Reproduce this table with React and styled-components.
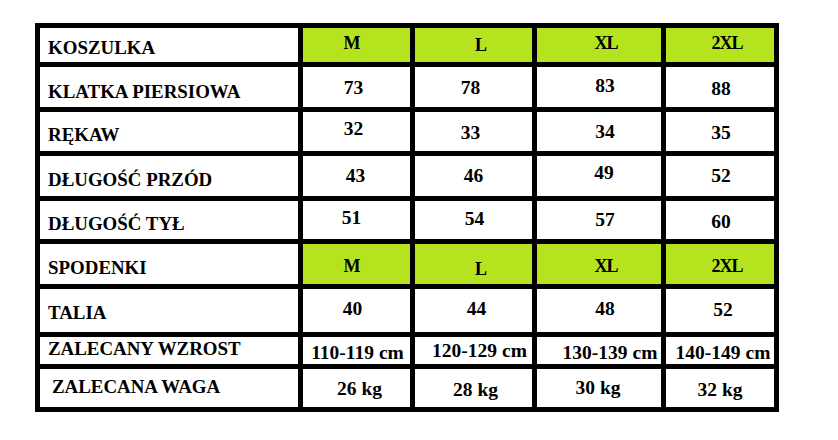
import styled, { createGlobalStyle } from 'styled-components';

const GlobalStyle = createGlobalStyle`
  html, body {
    margin: 0;
    padding: 0;
    background: #fff;
  }
`;

const Page = styled.div`
  width: 838px;
  height: 440px;
  padding: 23px 0 0 35px;
  box-sizing: border-box;
  background: #fff;
`;

const Table = styled.div`
  display: grid;
  grid-template-columns: 258px 107px 117px 124px 108px;
  grid-template-rows: 34px 40px 39px 40px 38px 40px 43px 27px 38px;
  gap: 5px;
  padding: 5px;
  width: max-content;
  background: #000;
  font-family: 'Liberation Serif', 'Times New Roman', serif;
  font-weight: bold;
  color: #000;
`;

const Cell = styled.div`
  box-sizing: border-box;
  background: ${({ $green }) => ($green ? '#b5e41f' : '#fff')};
  padding-top: ${({ $top }) => $top}px;
  line-height: 18px;
  white-space: nowrap;
  overflow: hidden;
`;

const Label = styled(Cell)`
  padding-left: ${({ $left }) => $left || 8}px;
  font-size: 18.9px;
`;

const Value = styled(Cell)`
  text-align: center;
  font-size: ${({ $size }) => $size}px;
  letter-spacing: ${({ $tight }) => ($tight ? '-1px' : '0')};
  padding-left: ${({ $dx }) => ($dx > 0 ? $dx * 2 : 0)}px;
  padding-right: ${({ $dx }) => ($dx < 0 ? -$dx * 2 : 0)}px;
`;

// [label, labelTop, labelLeft, green?, cells: [text, top, dx]]
const rows = [
  ['KOSZULKA', 11, 8, true, [['M', 6, -5], ['L', 8, 7], ['XL', 6, 7], ['2XL', 6, 7]]],
  ['KLATKA PIERSIOWA', 16, 8, false, [['73', 12, -3], ['78', 12, -3], ['83', 10, 6], ['88', 13, 1]]],
  ['RĘKAW', 14, 8, false, [['32', 8, -3], ['33', 12, -3], ['34', 11, 6], ['35', 12, 1]]],
  ['DŁUGOŚĆ PRZÓD', 15, 8, false, [['43', 11, -1], ['46', 11, 0], ['49', 8, 5], ['52', 11, 1]]],
  ['DŁUGOŚĆ TYŁ', 14, 8, false, [['51', 8, -5], ['54', 9, 1], ['57', 10, 6], ['60', 12, 1]]],
  ['SPODENKI', 15, 8, true, [['M', 13, -5], ['L', 16, 7], ['XL', 13, 7], ['2XL', 13, 7]]],
  ['TALIA', 15, 8, false, [['40', 11, -4], ['44', 11, 3], ['48', 11, 6], ['52', 12, 3]]],
  ['ZALECANY WZROST', 3, 8, false, [['110-119 cm', 7, 1], ['120-129 cm', 5, 6], ['130-139 cm', 7, 11], ['140-149 cm', 7, 3]]],
  ['ZALECANA WAGA', 9, 12, false, [['26 kg', 11, 3], ['28 kg', 12, 2], ['30 kg', 10, -1], ['32 kg', 12, 0]]],
];

function App() {
  return (
    <Page>
      <GlobalStyle />
      <Table>
        {rows.map(([label, top, left, green, cells]) => [
          <Label key={label} $top={top} $left={left}>
            {label}
          </Label>,
          ...cells.map(([text, ctop, dx], i) => (
            <Value
              key={label + i}
              $top={ctop}
              $dx={dx}
              $green={green}
              $tight={green}
              $size={green ? 18 : 19.5}
            >
              {text}
            </Value>
          )),
        ])}
      </Table>
    </Page>
  );
}

export default App;
